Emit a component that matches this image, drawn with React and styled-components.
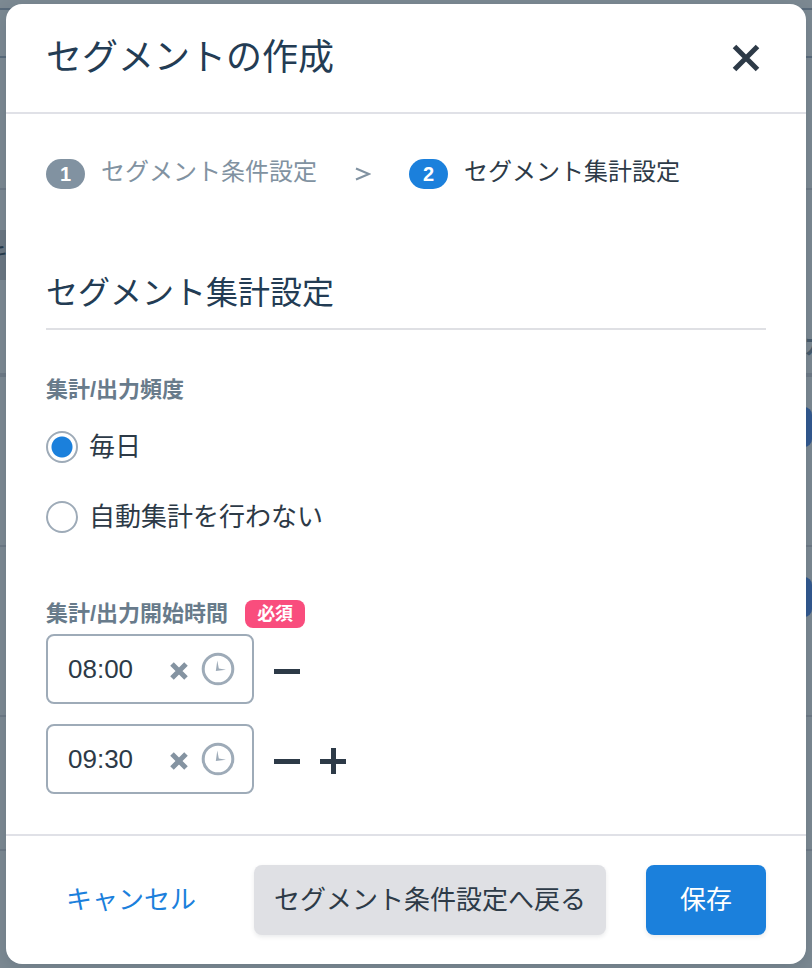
import React, { useState } from 'react';
import styled, { createGlobalStyle, css } from 'styled-components';

const GlobalStyle = createGlobalStyle`
  *, *::before, *::after { box-sizing: border-box; }
  body {
    margin: 0;
    color: #2d3a47;
    background: #7c8992;
    font-family: "Liberation Sans", "Noto Sans CJK JP", sans-serif;
    font-size: 26px;
    line-height: 40px;
  }
  button, input { font: inherit; color: inherit; margin: 0; }
  button { border: 0; padding: 0; background: none; cursor: pointer; }
  h1, h2 { margin: 0; font-weight: 400; color: #233c54; }
`;

const Screen = styled.div`
  display: grid;
  min-height: 100vh;
  overflow: hidden;
`;

const Backdrop = styled.div`
  grid-area: 1 / 1;
  display: flex;
  flex-direction: column;
`;

const BackdropRow = styled.div`
  display: flex;
  justify-content: space-between;
  align-items: flex-start;
  flex: none;
  height: ${({ $height }) => $height}px;
  padding-top: ${({ $inset }) => $inset || 0}px;
  background: ${({ $fill }) => $fill || 'transparent'};
  border-bottom: ${({ $line }) => $line || '2px solid #6e7a86'};
`;

const HiddenText = styled.span`
  display: flex;
  justify-content: ${({ $end }) => ($end ? 'flex-start' : 'flex-end')};
  width: 8px;
  white-space: nowrap;
  font-size: 24px;
  line-height: 32px;
  font-weight: ${({ $end }) => ($end ? 700 : 400)};
  color: ${({ $end }) => ($end ? '#465a6b' : '#263a4b')};
`;

const BackdropPill = styled.span`
  width: 12px;
  height: 40px;
  margin-left: auto;
  border-radius: 0 8px 8px 0;
  background: #32598f;
`;

const Dialog = styled.section`
  grid-area: 1 / 1;
  z-index: 1;
  display: flex;
  flex-direction: column;
  margin: 4px 6px;
  background: #fff;
  border-radius: 16px;
  box-shadow: 0 4px 16px rgba(30, 50, 65, 0.15);
`;

const Header = styled.header`
  display: flex;
  align-items: center;
  justify-content: space-between;
  height: 110px;
  padding: 0 40px;
  border-bottom: 2px solid #e0e1e7;
`;

const Title = styled.h1`
  font-size: 36px;
  line-height: 52px;
`;

const IconButton = styled.button`
  display: grid;
  place-items: center;
  width: ${({ $size }) => $size}px;
  height: ${({ $size }) => $size}px;
  color: ${({ $muted }) => ($muted ? '#8493a1' : '#2d3a47')};
  svg { display: block; }
`;

const Body = styled.div`
  flex: 1;
  padding: 40px 40px;
`;

const Steps = styled.ol`
  display: flex;
  align-items: center;
  gap: 38px;
  height: 40px;
  margin: 0 0 76px;
  padding: 0;
  list-style: none;
  font-size: 24px;
`;

const Step = styled.li`
  display: flex;
  align-items: center;
  gap: 16px;
  color: ${({ $active }) => ($active ? '#2d3a47' : '#8192a1')};
`;

const StepText = styled.span`
  padding-bottom: 4px;
  line-height: 36px;
`;

const StepNumber = styled.span`
  display: grid;
  place-items: center;
  width: 39px;
  height: 30px;
  border-radius: 15px;
  color: #fff;
  font-size: 20px;
  line-height: 30px;
  font-weight: 700;
  background: ${({ $active }) => ($active ? '#1b80dc' : '#8192a1')};
`;

const StepArrow = styled.li`
  color: #8192a1;
  width: 16px;
  svg { display: block; }
`;

const SectionTitle = styled.h2`
  padding-bottom: 12px;
  margin-bottom: 44px;
  border-bottom: 2px solid #dfe0e4;
  font-size: 32px;
  line-height: 46px;
`;

const Fieldset = styled.fieldset`
  min-width: 0;
  margin: 0;
  padding: 0;
  border: 0;
`;

const Legend = styled.legend`
  display: flex;
  align-items: center;
  gap: 17px;
  padding: 0;
  color: #687b8b;
  font-size: 22px;
  line-height: 32px;
  font-weight: 700;
`;

const RadioLabel = styled.label`
  display: flex;
  align-items: center;
  gap: 11px;
  height: 40px;
  margin-top: ${({ $first }) => ($first ? 21 : 30)}px;
`;

const Radio = styled.input`
  appearance: none;
  flex: none;
  width: 32px;
  height: 32px;
  border: 2px solid #9eabb8;
  border-radius: 50%;
  background: #fff;
  &:checked { background: radial-gradient(circle, #1b80dc 10px, #fff 11px); }
`;

const Required = styled.span`
  padding: 0 12px;
  border-radius: 8px;
  color: #fff;
  background: #f94d7d;
  font-size: 18px;
  line-height: 28px;
`;

const TimeGroup = styled(Fieldset)`
  margin-top: 61px;
`;

const TimeRow = styled.div`
  display: flex;
  align-items: center;
  gap: 16px;
  margin-top: ${({ $first }) => ($first ? 4 : 20)}px;
`;

const TimeField = styled.div`
  display: flex;
  align-items: center;
  width: 208px;
  height: 70px;
  padding: 0 17px 0 20px;
  border: 2px solid #9eabb8;
  border-radius: 8px;
`;

const TimeInput = styled.input`
  flex: 1;
  min-width: 0;
  padding: 0;
  border: 0;
  outline: 0;
  background: transparent;
`;

const TimeIcons = styled.div`
  display: flex;
  align-items: center;
  gap: 8px;
  button { height: 34px; padding-top: 4px; }
`;

const RowActions = styled.div`
  display: flex;
  align-items: center;
  gap: 12px;
  padding-top: 4px;
`;

const Footer = styled.footer`
  display: flex;
  align-items: center;
  justify-content: space-between;
  height: 130px;
  padding: 0 40px;
  border-top: 2px solid #e0e1e7;
`;

const FooterActions = styled.div`
  display: flex;
  gap: 40px;
`;

const variants = {
  link: css`color: #1b80dc;`,
  plain: css`background: #dfe0e4; box-shadow: 0 2px 4px rgba(45, 58, 71, 0.1);`,
  primary: css`color: #fff; background: #1b80dc; box-shadow: 0 2px 4px rgba(45, 58, 71, 0.1);`,
};

const Button = styled.button`
  min-width: 120px;
  height: 70px;
  padding: 0 20px;
  border-radius: 8px;
  white-space: nowrap;
  ${({ $variant }) => variants[$variant]}
`;

const CloseIcon = () => (
  <svg width="28" height="28" viewBox="0 0 28 28" fill="none" stroke="currentColor" strokeWidth="5" aria-hidden="true">
    <path d="M2.5 2.5 25.5 25.5M25.5 2.5 2.5 25.5" />
  </svg>
);

const ClearIcon = () => (
  <svg width="18" height="18" viewBox="0 0 18 18" fill="none" stroke="currentColor" strokeWidth="5" aria-hidden="true">
    <path d="M2 2 16 16M16 2 2 16" />
  </svg>
);

const ClockIcon = () => (
  <svg width="34" height="34" viewBox="0 0 34 34" aria-hidden="true">
    <circle cx="17" cy="17" r="14.8" fill="none" stroke="#9eabb8" strokeWidth="3" />
    <path d="M16.3 8.5 17.8 16.5 25 17.7 14.8 19Z" fill="#9eabb8" />
  </svg>
);

const MinusIcon = () => (
  <svg width="28" height="28" viewBox="0 0 28 28" aria-hidden="true">
    <path d="M1 12h26v5H1z" fill="currentColor" />
  </svg>
);

const PlusIcon = () => (
  <svg width="28" height="28" viewBox="0 0 28 28" aria-hidden="true">
    <path d="M1 12h11V1h5v11h10v5H17v10h-5V17H1z" fill="currentColor" />
  </svg>
);

const ArrowIcon = () => (
  <svg width="16" height="16" viewBox="0 0 16 16" fill="none" stroke="currentColor" strokeWidth="2.2" aria-hidden="true">
    <path d="M1 2.5 14 8 1 13.5" />
  </svg>
);

function TimePickerRow({ first, initial, canAdd }) {
  const [value, setValue] = useState(initial);
  return (
    <TimeRow $first={first}>
      <TimeField>
        <TimeInput type="text" aria-label="集計/出力開始時間" value={value} onChange={(e) => setValue(e.target.value)} />
        <TimeIcons>
          <IconButton type="button" $size={28} $muted aria-label="クリア" onClick={() => setValue('')}>
            <ClearIcon />
          </IconButton>
          <ClockIcon />
        </TimeIcons>
      </TimeField>
      <RowActions>
        <IconButton type="button" $size={34} aria-label="削除"><MinusIcon /></IconButton>
        {canAdd && <IconButton type="button" $size={34} aria-label="追加"><PlusIcon /></IconButton>}
      </RowActions>
    </TimeRow>
  );
}

export default function App() {
  const [frequency, setFrequency] = useState('daily');
  return (
    <Screen>
      <GlobalStyle />
      <Backdrop aria-hidden="true">
        <BackdropRow $height={10} $line="2px solid #5a6b7b" />
        <BackdropRow $height={48} $line="2px solid #5a6b7b" />
        <BackdropRow $height={132} />
        <BackdropRow $height={40} $line="0" />
        <BackdropRow $height={50} $inset={8} $fill="linear-gradient(90deg, #6b7782 50%, transparent 50%)" $line="0">
          <HiddenText>キ</HiddenText>
        </BackdropRow>
        <BackdropRow $height={97} $inset={50} $line="4px solid #6e7a86">
          <span />
          <HiddenText $end>カ</HiddenText>
        </BackdropRow>
        <BackdropRow $height={170} $inset={30}><BackdropPill /></BackdropRow>
        <BackdropRow $height={170} $inset={30}><BackdropPill /></BackdropRow>
        <BackdropRow $height={134} />
      </Backdrop>

      <Dialog role="dialog" aria-modal="true" aria-labelledby="dialog-title">
        <Header>
          <Title id="dialog-title">セグメントの作成</Title>
          <IconButton type="button" $size={40} aria-label="閉じる"><CloseIcon /></IconButton>
        </Header>

        <Body>
          <Steps>
            <Step><StepNumber>1</StepNumber><StepText>セグメント条件設定</StepText></Step>
            <StepArrow aria-hidden="true"><ArrowIcon /></StepArrow>
            <Step $active aria-current="step"><StepNumber $active>2</StepNumber><StepText>セグメント集計設定</StepText></Step>
          </Steps>

          <SectionTitle>セグメント集計設定</SectionTitle>

          <Fieldset>
            <Legend>集計/出力頻度</Legend>
            <RadioLabel $first>
              <Radio type="radio" name="frequency" checked={frequency === 'daily'} onChange={() => setFrequency('daily')} />
              毎日
            </RadioLabel>
            <RadioLabel>
              <Radio type="radio" name="frequency" checked={frequency === 'none'} onChange={() => setFrequency('none')} />
              自動集計を行わない
            </RadioLabel>
          </Fieldset>

          <TimeGroup>
            <Legend>集計/出力開始時間<Required>必須</Required></Legend>
            <TimePickerRow first initial="08:00" />
            <TimePickerRow initial="09:30" canAdd />
          </TimeGroup>
        </Body>

        <Footer>
          <Button type="button" $variant="link">キャンセル</Button>
          <FooterActions>
            <Button type="button" $variant="plain">セグメント条件設定へ戻る</Button>
            <Button type="button" $variant="primary">保存</Button>
          </FooterActions>
        </Footer>
      </Dialog>
    </Screen>
  );
}
